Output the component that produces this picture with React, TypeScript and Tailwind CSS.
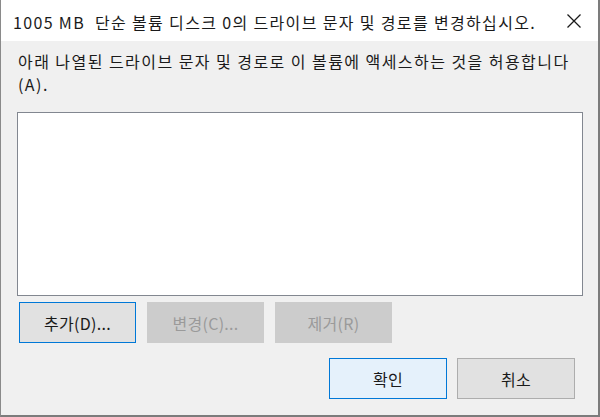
import * as React from "react";

const font = {
  fontFamily: '"Noto Sans CJK KR", "Noto Sans", sans-serif',
};

function DialogButton({
  label,
  variant = "normal",
  className = "w-[118px]",
}: {
  label: string;
  variant?: "normal" | "focus" | "default" | "disabled";
  className?: string;
}) {
  const styles = {
    normal: "bg-[#e1e1e1] border-[#adadad] text-[#1a1a1a]",
    focus: "bg-[#e1e1e1] border-[#0078d7] text-[#1a1a1a]",
    default: "bg-[#e5f1fb] border-[#0078d7] text-[#1a1a1a]",
    disabled: "bg-[#cccccc] border-[#cccccc] text-[#9a9a9a]",
  }[variant];

  return (
    <button
      className={`h-[41px] border text-[16px] tracking-[0.3px] flex items-center justify-center ${styles} ${className}`}
    >
      {label}
    </button>
  );
}

export default function App() {
  return (
    <div
      className="w-[600px] h-[417px] flex flex-col bg-[#f0f0f0] border-l border-l-[#8a8a8a] border-r-2 border-r-[#7c7c7c] border-b-2 border-b-[#7c7c7c]"
      style={font}
    >
      <div className="h-[41px] shrink-0 bg-white flex items-center justify-between pl-3 pr-4">
        <span className="text-[16px] tracking-[1.35px] text-[#1a1a1a] pt-[3px] whitespace-pre">
          1005 MB  단순 볼륨 디스크 0의 드라이브 문자 및 경로를 변경하십시오.
        </span>
        <svg width="16" height="16" viewBox="0 0 16 16" className="mt-[1px]">
          <path d="M1.5 1.5 L14.5 14.5 M14.5 1.5 L1.5 14.5" stroke="#1a1a1a" strokeWidth="1.3" />
        </svg>
      </div>

      <div className="flex-1 flex flex-col pl-[16px] pr-[15px]">
        <p className="pl-[1px] pt-[9px] text-[16px] tracking-[1.45px] leading-[23px] text-[#1a1a1a] whitespace-nowrap">
          아래 나열된 드라이브 문자 및 경로로 이 볼륨에 액세스하는 것을 허용합니다
          <br />
          (A).
        </p>

        <div className="mt-[16px] h-[184px] bg-white border border-[#828790]" />

        <div className="mt-[6px] flex gap-[11px] pl-[2px]">
          <DialogButton label="추가(D)..." variant="focus" className="w-[117px]" />
          <DialogButton label="변경(C)..." variant="disabled" className="w-[117px]" />
          <DialogButton label="제거(R)" variant="disabled" className="w-[117px]" />
        </div>

        <div className="mt-[15px] flex justify-end gap-[10px] pr-[8px]">
          <DialogButton label="확인" variant="default" />
          <DialogButton label="취소" />
        </div>
      </div>
    </div>
  );
}
